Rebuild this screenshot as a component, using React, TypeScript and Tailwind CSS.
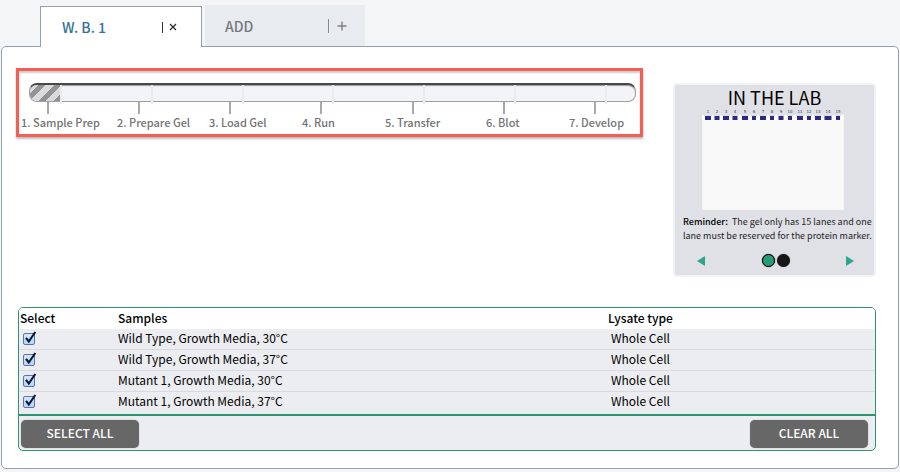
import React, { useState } from "react";

const steps = [
  "1. Sample Prep",
  "2. Prepare Gel",
  "3. Load Gel",
  "4. Run",
  "5. Transfer",
  "6. Blot",
  "7. Develop",
];

const samples = [
  { name: "Wild Type, Growth Media, 30°C", lysate: "Whole Cell" },
  { name: "Wild Type, Growth Media, 37°C", lysate: "Whole Cell" },
  { name: "Mutant 1, Growth Media, 30°C", lysate: "Whole Cell" },
  { name: "Mutant 1, Growth Media, 37°C", lysate: "Whole Cell" },
];

// Centre and width of every well at the top of the gel
const wells = [
  [6, 6], [15, 5], [24, 6], [33, 5], [43, 6], [52, 4], [61, 6], [70, 4],
  [79, 5], [88, 4], [98, 6], [107, 4], [116, 6], [126, 7], [136, 4],
];

function Tabs() {
  return (
    <nav className="flex items-end gap-[3px] pt-[5px] pl-10 text-sm font-medium">
      <div className="relative z-10 -mb-px flex h-[41px] w-[162px] items-center justify-between border border-b-0 border-[#94a1ac] bg-white pr-6 pl-[21px]">
        <button type="button" className="text-[#33719a]">W. B. 1</button>
        <span className="flex items-center gap-1.5">
          <span className="h-[11px] w-px bg-[#333333]" />
          <button type="button" aria-label="Close W. B. 1">
            <svg viewBox="0 0 8 8" className="h-2 w-2" stroke="#222222" strokeWidth="1.1">
              <path d="M1 1L7 7M7 1L1 7" />
            </svg>
          </button>
        </span>
      </div>
      <button
        type="button"
        className="flex h-[41px] w-40 items-center justify-between bg-[#e8ebf0] pr-[18px] pl-5 text-[#777a7c]"
      >
        ADD
        <span className="flex items-center gap-2">
          <span className="h-3.5 w-px bg-[#888888]" />
          <svg viewBox="0 0 10 10" className="h-2.5 w-2.5" stroke="#808080" strokeWidth="1.4">
            <path d="M5 0.5V9.5M0.5 5H9.5" />
          </svg>
        </span>
      </button>
    </nav>
  );
}

function Progress() {
  return (
    <section className="min-w-0 flex-1 border-3 border-[#f65d55] pt-3 pb-[3px] shadow-[0_2px_2px_#bbbbbb,inset_0_2px_2px_#cccccc]">
      <div className="pr-1 pl-2.5">
        <div
          role="progressbar"
          aria-label="Experiment progress"
          aria-valuemin={0}
          aria-valuemax={100}
          aria-valuenow={5}
          className="grid h-[19px] rounded-[8px] border border-t-2 border-[#a0a0a0] border-t-[#484848] bg-[#f3f4f7] shadow-[inset_0_1px_1px_#999999]"
        >
          <div className="col-start-1 row-start-1 h-4 w-8 rounded-l-[7px] bg-[repeating-linear-gradient(135deg,#dadadc_0px,#dadadc_6px,#929294_6px,#929294_11px)]" />
          <div className="col-start-1 row-start-1 flex h-[19px] justify-between pr-7 pl-[30px]">
            {steps.map((s) => (
              <span key={s} className="w-0.5 bg-[#eaebee]" />
            ))}
          </div>
        </div>
        <div className="flex h-3 justify-between pr-10 pl-[18px]">
          {steps.map((s) => (
            <span key={s} className="w-0.5 bg-[#a9a9a9]" />
          ))}
        </div>
      </div>
      <ol className="grid grid-cols-[96fr_92fr_93fr_83fr_101fr_83fr_71fr] pl-0.5 text-[11px] leading-[17px] font-medium whitespace-nowrap text-[#737373]">
        {steps.map((s) => (
          <li key={s}>{s}</li>
        ))}
      </ol>
    </section>
  );
}

function Gel() {
  return (
    <svg viewBox="0 0 142 101" className="mr-1 h-[101px] w-[142px]" role="img" aria-label="Gel with 15 lanes">
      <rect x="0" y="6" width="142" height="95" fill="#f4f4f5" />
      <rect x="1" y="6" width="140" height="94" fill="#f9f9f9" />
      <rect x="0" y="6" width="142" height="5" fill="#ffffff" />
      {wells.map(([x, w], i) => (
        <g key={x}>
          <text x={x} y="4" fontSize="4" fontFamily="DejaVu Sans, sans-serif" textAnchor="middle" fill="#333333">{i + 1}</text>
          <rect x={x - w / 2 - 1} y="6" width={w + 2} height="1" fill="#dcdce8" />
          <rect x={x - w / 2} y="7" width={w} height="4" fill="#2c2a82" />
        </g>
      ))}
    </svg>
  );
}

function LabCard() {
  return (
    <aside className="mt-[15px] flex h-[194px] w-[203px] shrink-0 flex-col items-center rounded-[4px] border-2 border-[#f1f2f5] bg-[#e0e1e7]">
      <h2 className="text-[18px] leading-6 text-black">IN THE LAB</h2>
      <Gel />
      <p className="self-start pt-[5px] pl-2 text-[9px] leading-3.5 whitespace-nowrap text-[#1c1c1c]">
        <strong className="font-medium text-black">Reminder:</strong>&nbsp; The gel only has 15 lanes and one
        <br />
        lane must be reserved for the protein marker.
      </p>
      <div className="flex w-full items-center justify-between pt-[11px] pr-5 pl-[22px]">
        <button type="button" aria-label="Previous">
          <svg viewBox="0 0 8 10" className="h-2.5 w-2" fill="#2ea58d"><path d="M0 5L8 0V10Z" /></svg>
        </button>
        <div className="flex gap-0.5">
          <button type="button" aria-label="Reminder 1" className="h-[13px] w-[13px] rounded-full border border-black bg-[#279a76] shadow-[0_0_1px_#000000]" />
          <button type="button" aria-label="Reminder 2" className="h-[13px] w-[13px] rounded-full bg-[#161616] shadow-[0_0_1px_#555555]" />
        </div>
        <button type="button" aria-label="Next">
          <svg viewBox="0 0 8 10" className="h-2.5 w-2" fill="#2ea58d"><path d="M8 5L0 0V10Z" /></svg>
        </button>
      </div>
    </aside>
  );
}

function SampleTable() {
  const [picked, setPicked] = useState(samples.map(() => true));
  const button = "h-7 w-[118px] rounded-[5px] bg-[#676767] pb-0.5 text-[12px] font-medium text-white shadow-[0_0_1px_#777777]";
  return (
    <section className="mt-[30px] ml-0.5 overflow-hidden rounded-[5px] border border-[#2a956f] bg-[#ecedf1]">
      <table className="w-full table-fixed border-separate border-spacing-0 text-left text-[12px] leading-[18px] text-black">
        <colgroup>
          <col className="w-[99px]" />
          <col className="w-[490px]" />
          <col />
        </colgroup>
        <thead className="bg-white">
          <tr className="h-[21px] leading-5 align-top">
            <th className="p-0 pl-px font-medium">Select</th>
            <th className="p-0 font-medium">Samples</th>
            <th className="p-0 font-medium">Lysate type</th>
          </tr>
        </thead>
        <tbody>
          {samples.map((s, i) => (
            <tr key={s.name} className="h-[21px] align-top *:border-b *:border-[#d9dadf] last:*:border-transparent">
              <td className="p-0 pt-0.5 pl-1">
                <label className="grid h-4 w-4">
                  <input
                    type="checkbox"
                    aria-label={s.name}
                    checked={picked[i]}
                    onChange={() => setPicked(picked.map((p, j) => (j === i ? !p : p)))}
                    className="peer col-start-1 row-start-1 h-3 w-3 appearance-none self-center rounded-[2px] border border-[#6670a4] bg-linear-to-b from-[#d3e6fb] to-[#a9d9fd]"
                  />
                  <svg
                    viewBox="0 0 16 16"
                    className="invisible col-start-1 row-start-1 h-4 w-4 peer-checked:visible"
                    fill="none"
                    stroke="#0b1730"
                    strokeWidth="2.1"
                  >
                    <path d="M3 6.8L5.8 10.5L12.3 1" />
                  </svg>
                </label>
              </td>
              <td className="p-0">{s.name}</td>
              <td className="p-0 pl-[3px]">{s.lysate}</td>
            </tr>
          ))}
        </tbody>
      </table>
      <div className="mt-px flex justify-between border-t-2 border-[#2a956f] pt-1 pr-[7px] pb-0.5 pl-0.5">
        <button type="button" className={button} onClick={() => setPicked(samples.map(() => true))}>SELECT ALL</button>
        <button type="button" className={button} onClick={() => setPicked(samples.map(() => false))}>CLEAR ALL</button>
      </div>
    </section>
  );
}

export default function App() {
  return (
    <div className="min-h-screen bg-[#f4f5f7] px-px pb-[3px] font-['Noto_Sans_CJK_SC','Noto_Sans',sans-serif]">
      <div className="-ml-px">
        <Tabs />
      </div>
      <main className="rounded-[5px] border border-[#94a1ac] bg-white pt-[21px] pr-[22px] pb-[17px] pl-3.5">
        <div className="flex items-start gap-[30px]">
          <Progress />
          <LabCard />
        </div>
        <SampleTable />
      </main>
    </div>
  );
}
